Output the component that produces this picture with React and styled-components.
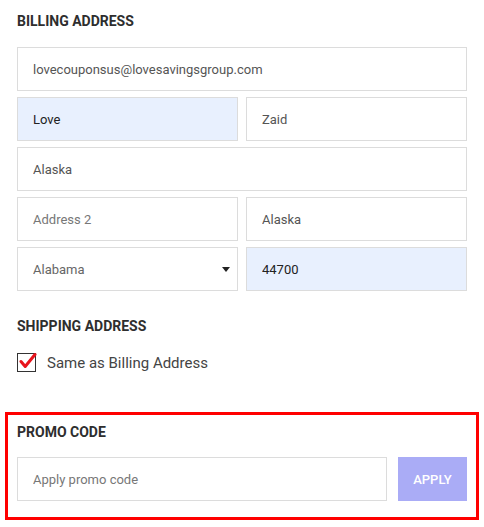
import React from "react";
import styled, { createGlobalStyle } from "styled-components";

const GlobalStyle = createGlobalStyle`
  body {
    margin: 0;
    background: #ffffff;
    font-family: Roboto, "Liberation Sans", Arial, sans-serif;
    color: #333;
  }
  * { box-sizing: border-box; }
`;

const Page = styled.div`
  width: 484px;
  padding: 13px 5px 0;
`;

const Section = styled.section`
  padding: 0 12px;
`;

const Heading = styled.h3`
  margin: 0;
  font-size: 14px;
  line-height: 16px;
  font-weight: 700;
  color: #2e2e2e;
  text-transform: uppercase;
`;

const Fields = styled.div`
  display: grid;
  grid-template-columns: 1fr 1fr;
  gap: 6px 8px;
  margin-top: 18px;
`;

const Field = styled.input`
  grid-column: ${(p) => (p.$wide ? "1 / -1" : "auto")};
  width: 100%;
  height: 44px;
  padding: 0 15px;
  border: 1px solid #dcdcdc;
  border-radius: 0;
  outline: none;
  background: ${(p) => (p.$filled ? "#e8f0fe" : "#ffffff")};
  font-family: Roboto, "Liberation Sans", Arial, sans-serif;
  font-size: 13px;
  color: ${(p) => p.$tone || "#555"};

  &::placeholder {
    color: #777;
  }
`;

const SelectWrap = styled.div`
  position: relative;
`;

const Select = styled.select`
  appearance: none;
  width: 100%;
  height: 44px;
  padding: 0 15px;
  border: 1px solid #dcdcdc;
  border-radius: 0;
  outline: none;
  background: #ffffff;
  font-family: Roboto, "Liberation Sans", Arial, sans-serif;
  font-size: 13px;
  color: #666;
`;

const Caret = styled.svg`
  position: absolute;
  right: 8px;
  top: 20px;
  pointer-events: none;
`;

const ShippingSection = styled(Section)`
  margin-top: 27px;
`;

const CheckRow = styled.label`
  display: flex;
  align-items: center;
  gap: 11px;
  margin-top: 19px;
  font-size: 15px;
  color: #444;
`;

const CheckBox = styled.span`
  position: relative;
  width: 19px;
  height: 19px;
  border: 1.5px solid #333;
  flex-shrink: 0;
`;

const Tick = styled.svg`
  position: absolute;
  left: 1px;
  top: -2px;
`;

const PromoSection = styled.section`
  margin-top: 40px;
  border: 3px solid #ff0000;
  padding: 9px 9px 16px;
`;

const PromoRow = styled.div`
  display: flex;
  gap: 11px;
  margin-top: 17px;
`;

const PromoInput = styled(Field)`
  flex: 1;
`;

const ApplyButton = styled.button`
  width: 69px;
  height: 44px;
  border: none;
  border-radius: 0;
  background: #aaacf6;
  color: #ffffff;
  font-family: Roboto, "Liberation Sans", Arial, sans-serif;
  font-size: 13px;
  font-weight: 500;
  text-transform: uppercase;
  cursor: pointer;
`;

export default function App() {
  return (
    <>
      <GlobalStyle />
      <Page>
        <Section>
          <Heading>Billing Address</Heading>
          <Fields>
            <Field $wide readOnly defaultValue="lovecouponsus@lovesavingsgroup.com" />
            <Field $filled $tone="#222" readOnly defaultValue="Love" />
            <Field readOnly defaultValue="Zaid" />
            <Field $wide readOnly defaultValue="Alaska" />
            <Field placeholder="Address 2" />
            <Field readOnly defaultValue="Alaska" />
            <SelectWrap>
              <Select defaultValue="AL">
                <option value="AL">Alabama</option>
                <option value="AK">Alaska</option>
              </Select>
              <Caret width="8" height="5" viewBox="0 0 8 5">
                <path d="M0 0h8L4 5z" fill="#222" />
              </Caret>
            </SelectWrap>
            <Field $filled $tone="#222" readOnly defaultValue="44700" />
          </Fields>
        </Section>

        <ShippingSection>
          <Heading>Shipping Address</Heading>
          <CheckRow>
            <CheckBox>
              <Tick width="18" height="18" viewBox="0 0 18 18">
                <path
                  d="M2 9.5l4.2 5L16 2.5"
                  fill="none"
                  stroke="#e8141c"
                  strokeWidth="3"
                  strokeLinecap="round"
                  strokeLinejoin="round"
                />
              </Tick>
            </CheckBox>
            Same as Billing Address
          </CheckRow>
        </ShippingSection>

        <PromoSection>
          <Heading>Promo Code</Heading>
          <PromoRow>
            <PromoInput placeholder="Apply promo code" />
            <ApplyButton>Apply</ApplyButton>
          </PromoRow>
        </PromoSection>
      </Page>
    </>
  );
}
